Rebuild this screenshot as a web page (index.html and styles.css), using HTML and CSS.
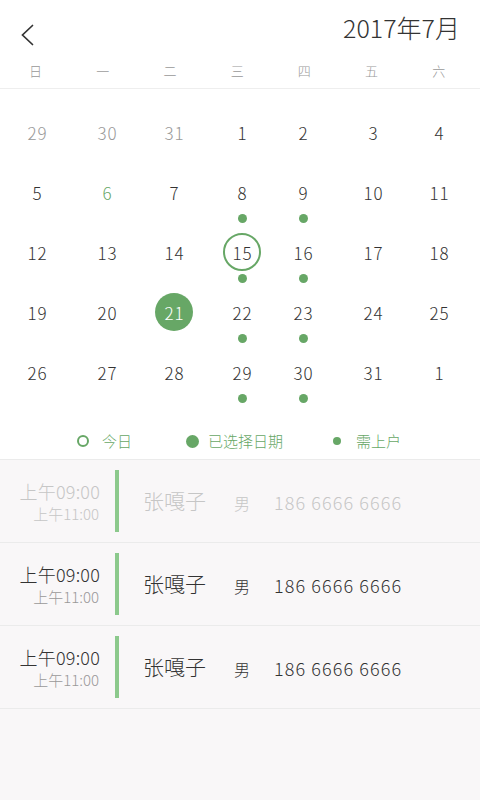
FILE: index.html
```html
<!DOCTYPE html>
<html lang="zh">
<head>
<meta charset="utf-8">
<link rel="stylesheet" href="styles.css">
</head>
<body>
<div class="app">
  <header class="top">
    <svg class="back" width="14" height="22" viewBox="0 0 14 22"><path d="M12.5 1.5 L2.5 11 L12.5 20.5" fill="none" stroke="#333" stroke-width="1.7" stroke-linecap="round" stroke-linejoin="miter"/></svg>
    <h1 class="title">2017年7月</h1>
  </header>
  <div class="weekdays">
    <span>日</span><span>一</span><span>二</span><span>三</span><span>四</span><span>五</span><span>六</span>
  </div>
  <div class="calendar">
    <div class="cell muted"><span class="num">29</span></div>
    <div class="cell muted"><span class="num">30</span></div>
    <div class="cell muted"><span class="num">31</span></div>
    <div class="cell"><span class="num">1</span></div>
    <div class="cell"><span class="num">2</span></div>
    <div class="cell"><span class="num">3</span></div>
    <div class="cell"><span class="num">4</span></div>

    <div class="cell"><span class="num">5</span></div>
    <div class="cell green"><span class="num">6</span></div>
    <div class="cell"><span class="num">7</span></div>
    <div class="cell"><span class="num">8</span><i class="dot"></i></div>
    <div class="cell"><span class="num">9</span><i class="dot"></i></div>
    <div class="cell"><span class="num">10</span></div>
    <div class="cell"><span class="num">11</span></div>

    <div class="cell"><span class="num">12</span></div>
    <div class="cell"><span class="num">13</span></div>
    <div class="cell"><span class="num">14</span></div>
    <div class="cell"><span class="num today">15</span><i class="dot"></i></div>
    <div class="cell"><span class="num">16</span><i class="dot"></i></div>
    <div class="cell"><span class="num">17</span></div>
    <div class="cell"><span class="num">18</span></div>

    <div class="cell"><span class="num">19</span></div>
    <div class="cell"><span class="num">20</span></div>
    <div class="cell"><span class="num selected">21</span></div>
    <div class="cell"><span class="num">22</span><i class="dot"></i></div>
    <div class="cell"><span class="num">23</span><i class="dot"></i></div>
    <div class="cell"><span class="num">24</span></div>
    <div class="cell"><span class="num">25</span></div>

    <div class="cell"><span class="num">26</span></div>
    <div class="cell"><span class="num">27</span></div>
    <div class="cell"><span class="num">28</span></div>
    <div class="cell"><span class="num">29</span><i class="dot"></i></div>
    <div class="cell"><span class="num">30</span><i class="dot"></i></div>
    <div class="cell"><span class="num">31</span></div>
    <div class="cell"><span class="num">1</span></div>
  </div>
  <div class="legend">
    <span class="item"><i class="mark ring"></i>今日</span>
    <span class="item"><i class="mark fill"></i>已选择日期</span>
    <span class="item"><i class="mark small"></i>需上户</span>
  </div>
  <div class="list">
    <div class="row faded">
      <div class="time"><div class="start">上午09:00</div><div class="end">上午11:00</div></div>
      <div class="bar"></div>
      <div class="name">张嘎子</div>
      <div class="sex">男</div>
      <div class="phone">186 6666 6666</div>
    </div>
    <div class="row">
      <div class="time"><div class="start">上午09:00</div><div class="end">上午11:00</div></div>
      <div class="bar"></div>
      <div class="name">张嘎子</div>
      <div class="sex">男</div>
      <div class="phone">186 6666 6666</div>
    </div>
    <div class="row">
      <div class="time"><div class="start">上午09:00</div><div class="end">上午11:00</div></div>
      <div class="bar"></div>
      <div class="name">张嘎子</div>
      <div class="sex">男</div>
      <div class="phone">186 6666 6666</div>
    </div>
  </div>
</div>
</body>
</html>
```
FILE: styles.css
```css
* { box-sizing: border-box; margin: 0; padding: 0; }
html, body { width: 480px; height: 800px; }
body {
  font-family: "Noto Sans CJK SC", "Noto Sans", sans-serif;
  font-weight: 300;
  color: #333;
  background: #f9f7f8;
}
.app { width: 480px; min-height: 800px; display: flex; flex-direction: column; }

.top {
  height: 58px;
  background: #fff;
  display: flex;
  justify-content: space-between;
  align-items: flex-start;
  padding: 0 20px 0 20px;
}
.back { margin-top: 24px; }
.title {
  font-weight: 300;
  font-size: 25px;
  line-height: 58px;
  margin-top: -2px;
  color: #333;
}

.weekdays {
  background: #fff;
  display: grid;
  grid-template-columns: repeat(7, 67.2px);
  padding-left: 2px;
  height: 31px;
  border-bottom: 1px solid #eee;
}
.weekdays span {
  text-align: center;
  font-size: 13px;
  line-height: 26px;
  color: #999;
}

.calendar {
  background: #fff;
  display: grid;
  grid-template-columns: 74px 66px 68px 68px 54px 86px 46px;
  grid-auto-rows: 60px;
  padding-top: 23px;
}
.cell {
  display: flex;
  flex-direction: column;
  align-items: center;
}
.num {
  width: 38px;
  height: 38px;
  margin-top: 1px;
  border-radius: 50%;
  display: flex;
  align-items: center;
  justify-content: center;
  font-size: 17px;
  letter-spacing: 1px;
  text-indent: 1px;
  color: #333;
}
.muted .num { color: #999; }
.green .num { color: #67a766; }
.num.today { border: 2px solid #67a766; }
.num.selected { background: #67a766; color: #fff; }
.dot {
  width: 9px;
  height: 9px;
  border-radius: 50%;
  background: #67a766;
  margin-top: 3px;
}

.legend {
  background: #fff;
  display: flex;
  padding: 18px 0 7px 77px;
  height: 47px;
  color: #67a766;
  font-size: 15px;
  line-height: 22px;
}
.item { display: flex; align-items: center; }
.item:nth-child(1) { width: 109px; }
.item:nth-child(2) { width: 145px; }
.mark { display: block; border-radius: 50%; }
.mark.ring { width: 12px; height: 12px; border: 2px solid #67a766; margin-right: 13px; }
.mark.fill { width: 13px; height: 13px; background: #67a766; margin-right: 9px; }
.mark.small { width: 8px; height: 8px; background: #67a766; margin-left: 2px; margin-right: 15px; }

.list {
  border-top: 1px solid #ebebeb;
  background: #f9f7f8;
  flex: 1;
}
.row {
  height: 83px;
  border-bottom: 1px solid #ebebeb;
  display: flex;
  align-items: center;
}
.time { width: 100px; text-align: right; }
.start { font-size: 18px; line-height: 23px; color: #333; letter-spacing: 0.2px; }
.end { font-size: 15px; line-height: 19px; color: #999; margin-right: 1px; margin-top: 1px; }
.bar { width: 4px; height: 62px; background: #8cc98c; margin-left: 15px; }
.name { font-size: 21px; margin-left: 24px; color: #333; margin-top: -2px; }
.sex { font-size: 16px; margin-left: 28px; color: #333; margin-top: 4px; }
.phone { font-size: 18px; margin-left: 24px; color: #333; letter-spacing: 1.1px; margin-top: 2px; }
.faded .start, .faded .end, .faded .name, .faded .sex, .faded .phone { color: #c6c6c6; }
```
